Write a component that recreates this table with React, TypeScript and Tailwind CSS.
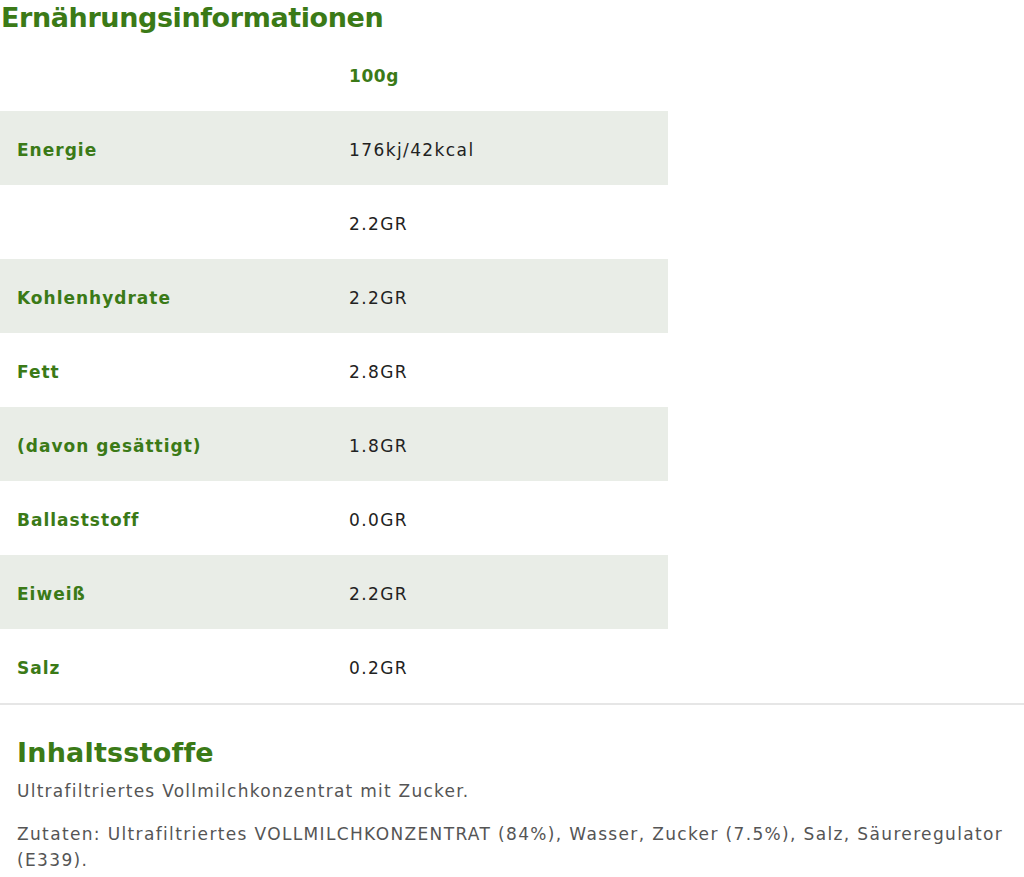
import React from "react";

const rows: { label: string; value: string; header?: boolean }[] = [
  { label: "", value: "100g", header: true },
  { label: "Energie", value: "176kj/42kcal" },
  { label: "", value: "2.2GR" },
  { label: "Kohlenhydrate", value: "2.2GR" },
  { label: "Fett", value: "2.8GR" },
  { label: "(davon gesättigt)", value: "1.8GR" },
  { label: "Ballaststoff", value: "0.0GR" },
  { label: "Eiweiß", value: "2.2GR" },
  { label: "Salz", value: "0.2GR" },
];

export default function App() {
  return (
    <div className="w-[1024px] h-[877px] bg-white overflow-hidden" style={{ fontFamily: '"DejaVu Sans", "Liberation Sans", sans-serif' }}>
      <h1 className="pt-[1px] pl-[1px] text-[27px] leading-[34px] font-bold text-[#3b7a17] tracking-[-0.4px]">
        Ernährungsinformationen
      </h1>
      <div className="w-[668px] mt-[2px]">
        {rows.map((r, i) => (
          <div
            key={i}
            className={`flex items-center h-[74px] pt-[6px] ${i % 2 === 1 ? "bg-[#e9ede7]" : "bg-white"}`}
          >
            <div className="w-[349px] pl-[17px] text-[17px] font-bold text-[#3b7a17] tracking-[1px]">
              {r.label}
            </div>
            <div
              className={`text-[17px] ${r.header ? "font-bold text-[#3b7a17] tracking-[0.6px]" : "text-[#222] tracking-[1.4px]"}`}
            >
              {r.value}
            </div>
          </div>
        ))}
      </div>
      <div className="border-t-2 border-[#e6e6e6] mt-[0px]" />
      <div className="px-[17px] pt-[31px]">
        <h2 className="text-[27px] leading-[34px] font-bold text-[#3b7a17] tracking-[0.2px]">
          Inhaltsstoffe
        </h2>
        <p className="text-[17px] leading-[26px] text-[#555] tracking-[1.25px] mt-[8px]">
          Ultrafiltriertes Vollmilchkonzentrat mit Zucker.
        </p>
        <p className="text-[17px] leading-[26px] text-[#555] tracking-[1.35px] mt-[17px]">
          Zutaten: Ultrafiltriertes VOLLMILCHKONZENTRAT (84%), Wasser, Zucker (7.5%), Salz, Säureregulator (E339).
        </p>
      </div>
    </div>
  );
}
